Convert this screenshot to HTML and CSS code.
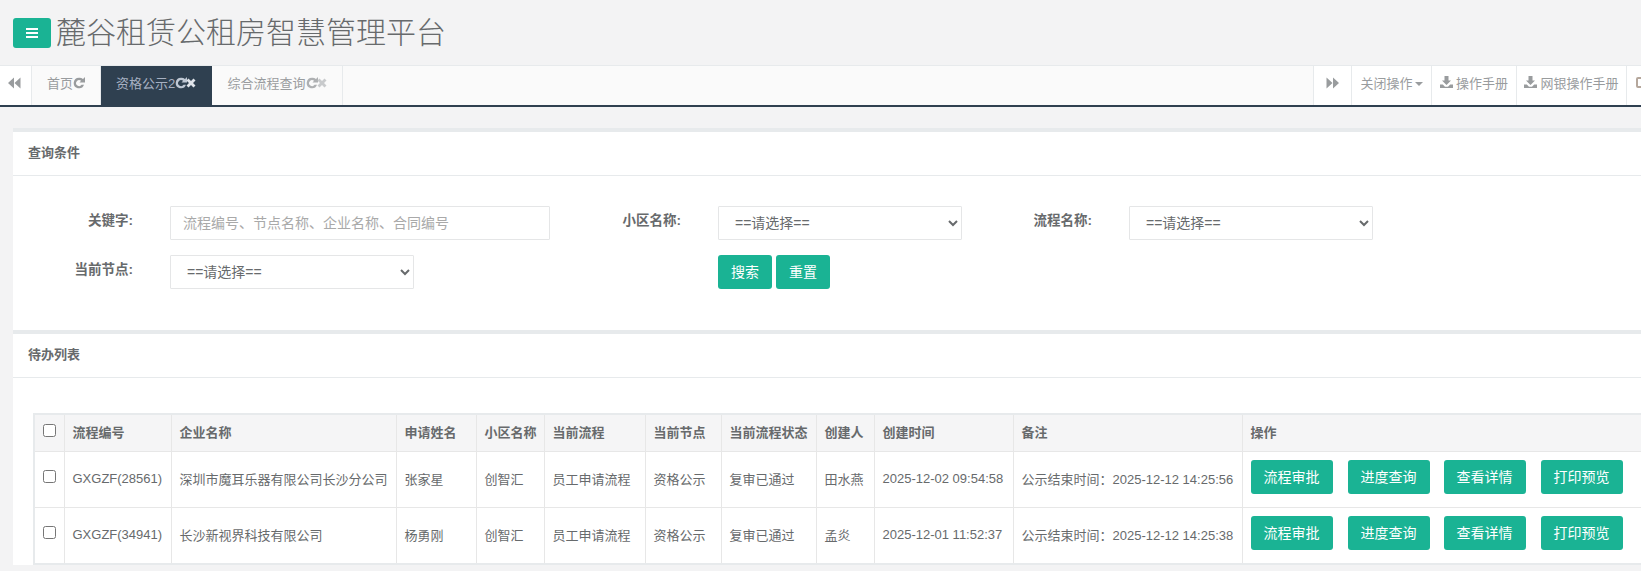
FILE: index.html
```html
<!DOCTYPE html>
<html lang="zh-CN">
<head>
<meta charset="utf-8">
<title>麓谷租赁公租房智慧管理平台</title>
<link rel="stylesheet" href="styles.css">
</head>
<body>
<svg class="defs" width="0" height="0" aria-hidden="true">
  <symbol id="i-back" viewBox="0 0 14 12"><path d="M7 .5v11L1 6zM13.500 .5v11L7.500 6z"/></symbol>
  <symbol id="i-fwd" viewBox="0 0 14 12"><path d="M.5 .5v11L6.500 6zM7 .5v11L13 6z"/></symbol>
  <symbol id="i-repeat" viewBox="0 0 12 12"><path d="M6 .7a5.300 5.300 0 1 0 5 7.100H8.600A3 3 0 1 1 8.100 3.800L6.500 5.500H12V0L10 2.100A5.300 5.300 0 0 0 6 .7z"/></symbol>
  <symbol id="i-x" viewBox="0 0 10 10"><path d="M2.500 .5 5 3 7.500 .5 9.500 2.500 7 5 9.500 7.500 7.500 9.500 5 7 2.500 9.500 .5 7.500 3 5 .5 2.500z"/></symbol>
  <symbol id="i-down" viewBox="0 0 13 12"><path d="M4.500 0h4v4.500H11L6.500 9 2 4.500h2.500zM0 8.500h2.800L5 10.700h3l2.200-2.200H13V12H0z"/></symbol>
</svg>

<header class="top">
  <button class="menu-btn" aria-label="菜单"><span></span><span></span><span></span></button>
  <h1 class="brand">麓谷租赁公租房智慧管理平台</h1>
</header>

<nav class="tabs">
  <a class="nav-btn nav-back"><svg class="ic-nav"><use href="#i-back"/></svg></a>
  <a class="tab tab-home">首页<svg class="ic-r"><use href="#i-repeat"/></svg></a>
  <a class="tab tab-active">资格公示2<svg class="ic-r"><use href="#i-repeat"/></svg><svg class="ic-x"><use href="#i-x"/></svg></a>
  <a class="tab tab-flow">综合流程查询<svg class="ic-r"><use href="#i-repeat"/></svg><svg class="ic-x"><use href="#i-x"/></svg></a>
  <div class="tabs-fill"></div>
  <a class="nav-btn nav-fwd"><svg class="ic-nav"><use href="#i-fwd"/></svg></a>
  <a class="tool tool-close">关闭操作<i class="caret"></i></a>
  <a class="tool tool-manual"><svg class="ic-d"><use href="#i-down"/></svg>操作手册</a>
  <a class="tool tool-bank"><svg class="ic-d"><use href="#i-down"/></svg>网银操作手册</a>
  <a class="tool tool-exit"><i class="exit-mark"></i></a>
</nav>

<main class="content">
  <section class="panel panel-search">
    <h2 class="panel-title">查询条件</h2>
    <form class="search">
      <label class="lbl">关键字:</label>
      <input class="field field-key" placeholder="流程编号、节点名称、企业名称、合同编号">
      <label class="lbl">小区名称:</label>
      <select class="field"><option>==请选择==</option></select>
      <label class="lbl">流程名称:</label>
      <select class="field"><option>==请选择==</option></select>
      <label class="lbl">当前节点:</label>
      <select class="field field-node"><option>==请选择==</option></select>
      <div class="actions">
        <button type="button" class="btn btn-sm">搜索</button>
        <button type="button" class="btn btn-sm">重置</button>
      </div>
    </form>
  </section>

  <section class="panel panel-list">
    <h2 class="panel-title">待办列表</h2>
    <div class="table-wrap">
      <table class="grid">
        <thead>
          <tr>
            <th class="c-check"><input type="checkbox"></th>
            <th class="c-no">流程编号</th>
            <th class="c-co">企业名称</th>
            <th class="c-name">申请姓名</th>
            <th class="c-area">小区名称</th>
            <th class="c-flow">当前流程</th>
            <th class="c-node">当前节点</th>
            <th class="c-state">当前流程状态</th>
            <th class="c-by">创建人</th>
            <th class="c-time">创建时间</th>
            <th class="c-note">备注</th>
            <th class="c-ops">操作</th>
          </tr>
        </thead>
        <tbody>
          <tr>
            <td class="c-check"><input type="checkbox"></td>
            <td>GXGZF(28561)</td>
            <td>深圳市魔耳乐器有限公司长沙分公司</td>
            <td>张家星</td>
            <td>创智汇</td>
            <td>员工申请流程</td>
            <td>资格公示</td>
            <td>复审已通过</td>
            <td>田水燕</td>
            <td>2025-12-02 09:54:58</td>
            <td>公示结束时间：2025-12-12 14:25:56</td>
            <td class="ops"><a class="btn">流程审批</a><a class="btn">进度查询</a><a class="btn">查看详情</a><a class="btn">打印预览</a></td>
          </tr>
          <tr>
            <td class="c-check"><input type="checkbox"></td>
            <td>GXGZF(34941)</td>
            <td>长沙新视界科技有限公司</td>
            <td>杨勇刚</td>
            <td>创智汇</td>
            <td>员工申请流程</td>
            <td>资格公示</td>
            <td>复审已通过</td>
            <td>孟炎</td>
            <td>2025-12-01 11:52:37</td>
            <td>公示结束时间：2025-12-12 14:25:38</td>
            <td class="ops"><a class="btn">流程审批</a><a class="btn">进度查询</a><a class="btn">查看详情</a><a class="btn">打印预览</a></td>
          </tr>
        </tbody>
      </table>
    </div>
  </section>
</main>
</body>
</html>
```
FILE: styles.css
```css
* { box-sizing: border-box; }
html, body { margin: 0; height: 571px; overflow: hidden; }
body {
  width: 1641px;
  background: #f3f3f4;
  color: #676a6c;
  font: 13px "Liberation Sans", "Noto Sans CJK SC", sans-serif;
}
.defs { position: absolute; }

.top { height: 65px; display: flex; align-items: flex-start; padding: 18px 0 0 13px; }
.menu-btn {
  width: 38px; height: 30px; padding: 0; border: 0; border-radius: 3px;
  background: #1ab394;
  display: flex; flex-direction: column; align-items: center; justify-content: center; gap: 2px;
}
.menu-btn span { width: 12px; height: 2px; background: #fff; }
.brand { margin: -4px 0 0 5px; font-size: 30px; line-height: 38px; font-weight: 300; color: #676a6c; }

.tabs {
  height: 42px; display: flex; align-items: stretch;
  background: #fafafa;
  border-top: 1px solid #e7eaec;
  border-bottom: 2px solid #2f4050;
  color: #999c9e;
}
.tabs a { display: flex; align-items: center; justify-content: center; padding-bottom: 6px; border-right: 1px solid #e7eaec; white-space: nowrap; }
.tabs svg { fill: currentColor; flex: none; }
.nav-btn { background: #fff; color: #999c9e; }
.nav-back { width: 32px; justify-content: flex-start !important; padding-left: 7px; }
.nav-fwd { width: 39px; border-left: 1px solid #e7eaec; }
.ic-nav { width: 14px; height: 12px; }
.tab { padding-left: 15px; padding-right: 15px; }
.tab-home { width: 69px; }
.tab-active { width: 111px; background: #2f4050; color: #a7b1c2; border-right-color: #2f4050 !important; }
.tab-flow { width: 131px; }
.ic-r { width: 12px; height: 12px; margin-top: 1px; }
.ic-x { width: 10px; height: 10px; margin-left: -1px; margin-top: 1px; }
.tab-flow .ic-r { color: #aeb0b2; }
.tab-flow .ic-x { color: #c8cacc; }
.tab-active .ic-r { color: #bfc8d4; }
.tab-active .ic-x { color: #e0e4ea; }
.tabs-fill { flex: 1; }
.tool { background: #fff; color: #999c9e; }
.tool-close { width: 80px; }
.tool-manual { width: 85px; }
.tool-bank { width: 110px; }
.tool-exit { width: 14px; justify-content: flex-start !important; padding-left: 9px; border-right: 0 !important; overflow: hidden; }
.exit-mark { flex: none; width: 11px; height: 11px; border: 2px solid #b5a79c; border-radius: 2px; }
.ic-d { width: 13px; height: 12px; margin-right: 3px; margin-top: -1px; }
.caret { width: 0; height: 0; margin: 2px 0 0 2px; border: 4px solid transparent; border-top-color: #999c9e; border-bottom: 0; }

.content { padding: 21px 0 0 13px; width: 1680px; }
.panel { background: #fff; border-top: 4px solid #e7eaec; }
.panel-title {
  margin: 0; height: 44px; padding: 0 0 0 15px;
  font-size: 13px; line-height: 42px; font-weight: 700; color: #676a6c;
  border-bottom: 1px solid #e7eaec;
}
.panel-search { height: 202px; }
.search {
  display: grid;
  grid-template-columns: 157px 380px 168px 244px 167px 244px;
  grid-auto-rows: 34px;
  row-gap: 15px;
  align-items: center;
  padding-top: 30px;
  justify-content: start;
  font-size: 14px;
}
.lbl { text-align: right; font-weight: 700; font-size: 13.500px; line-height: 20px; padding: 0 37px 4px 0; }
.field {
  height: 34px; padding: 0 12px; width: 100%;
  border: 1px solid #e5e6e7; border-radius: 1px; background: #fff; color: #676a6c;
  font: 14px "Liberation Sans", "Noto Sans CJK SC", sans-serif;
  outline: 0;
}
.field-node { width: 244px; }
.field::placeholder { color: #a9a9a9; }
.actions { grid-column: 4 / 6; display: flex; gap: 4px; }
.btn {
  display: inline-block; height: 34px; padding: 0; border: 0; border-radius: 3px;
  background: #1ab394; color: #fff; font: 14px/34px "Liberation Sans", "Noto Sans CJK SC", sans-serif;
  text-align: center;
}
.btn-sm { width: 54px; }

.table-wrap { padding: 35px 0 0 20px; }
.grid { border-collapse: collapse; table-layout: fixed; width: 1640px; border: 2px solid #e7eaec; }
.grid th, .grid td { border: 1px solid #e7e7e7; padding: 0 8px; text-align: left; white-space: nowrap; overflow: hidden; }
.grid th { height: 37px; background: #f5f5f6; font-weight: 700; padding-bottom: 2px; }
.grid td { height: 56px; padding-bottom: 2px; }
.grid tbody tr:last-child td { height: 57px; }
.grid input[type=checkbox] { display: block; width: 13px; height: 13px; margin: -3px 0 0 0; }
.grid td.c-check input { margin-top: -4px; }
.c-check { width: 30px; }
.c-no { width: 107px; }
.c-co { width: 225px; }
.c-name { width: 80px; }
.c-area { width: 68px; }
.c-flow { width: 101px; }
.c-node { width: 76px; }
.c-state { width: 95px; }
.c-by { width: 58px; }
.c-time { width: 139px; }
.c-note { width: 229px; }
.c-ops { width: 432px; }
.grid td.ops { font-size: 0; vertical-align: top; padding-top: 8px; }
.ops .btn { width: 82px; margin-right: 15px; }
.ops .btn:nth-child(2) { margin-right: 14px; }
```
